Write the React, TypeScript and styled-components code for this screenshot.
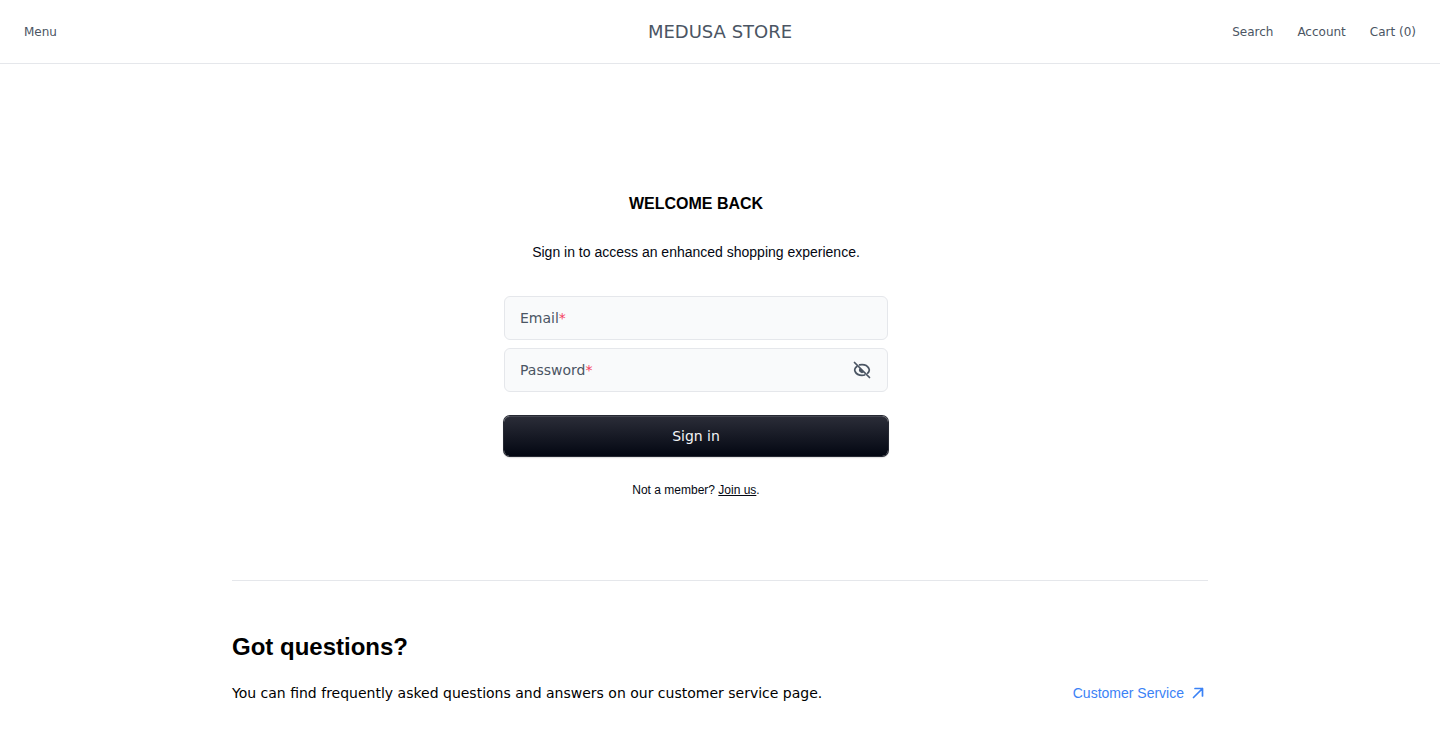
import React, { useState } from "react";
import styled, { createGlobalStyle } from "styled-components";

const sans = `"Liberation Sans", Arial, sans-serif`;
const ui = `"DejaVu Sans", Verdana, sans-serif`;

const GlobalStyle = createGlobalStyle`
  *, *::before, *::after { box-sizing: border-box; }
  body { margin: 0; background: #fff; color: #000; font-family: ${ui}; font-size: 14px; line-height: 24px; }
  h1, h2, p { margin: 0; }
  a { color: inherit; text-decoration: none; }
  button, input { font: inherit; color: inherit; }
`;

const Header = styled.header`
  display: flex;
  align-items: center;
  justify-content: space-between;
  height: 64px;
  padding: 0 24px;
  border-bottom: 1px solid #e5e7eb;
  color: #4b5563;
  font-size: 12px;
  line-height: 20px;
`;

const NavSide = styled.nav<{ $end?: boolean }>`
  display: flex;
  flex: 1 0 0;
  gap: 24px;
  justify-content: ${(p) => (p.$end ? "flex-end" : "flex-start")};
`;

const MenuButton = styled.button`
  padding: 0;
  border: 0;
  background: none;
  cursor: pointer;
`;

const Brand = styled.a`
  font-size: 18px;
  line-height: 28px;
  text-transform: uppercase;
`;

const Container = styled.main`
  max-width: 1024px;
  margin: 0 auto;
  padding: 48px 24px;
`;

const AccountGrid = styled.section`
  display: grid;
  grid-template-columns: 240px 1fr;
  padding: 48px 0;
  border-bottom: 1px solid #e5e7eb;
`;

const FormColumn = styled.div`
  grid-column: 2;
  padding: 32px;
`;

const SignInPanel = styled.div`
  display: flex;
  flex-direction: column;
  align-items: center;
  max-width: 384px;
  font-family: ${sans};
`;

const Title = styled.h1`
  margin-bottom: 24px;
  font-size: 16px;
  line-height: 24px;
  text-transform: uppercase;
`;

const Lead = styled.p`
  margin-bottom: 32px;
  color: #030712;
  text-align: center;
`;

const Form = styled.form`
  display: flex;
  flex-direction: column;
  gap: 8px;
  width: 100%;
  font-family: ${ui};
`;

const Field = styled.div`
  position: relative;
  color: #4b5563;
`;

const Label = styled.label`
  position: absolute;
  top: 10px;
  left: 16px;
  pointer-events: none;
`;

const Required = styled.span`
  color: #f43f5e;
`;

const Input = styled.input`
  display: block;
  width: 100%;
  height: 44px;
  padding: 16px 16px 4px;
  border: 1px solid #e5e7eb;
  border-radius: 6px;
  background: #f9fafb;
  outline: none;

  &:focus { border-color: #3b82f6; }
  &:focus + ${Label}, &:not(:placeholder-shown) + ${Label} {
    top: 0;
    font-size: 10px;
  }
`;

const RevealButton = styled.button`
  position: absolute;
  top: 12px;
  right: 16px;
  display: flex;
  padding: 0;
  border: 0;
  background: none;
  cursor: pointer;
`;

const SubmitButton = styled.button`
  height: 40px;
  margin-top: 16px;
  border: 0;
  border-radius: 6px;
  background: linear-gradient(180deg, #2b2d38 0%, #030712 100%);
  box-shadow: 0 0 0 1px #262933, 0 1px 2px 0 rgba(0, 0, 0, 0.4),
    inset 0 1px 0 rgba(255, 255, 255, 0.12);
  color: #f3f4f6;
  cursor: pointer;
`;

const JoinText = styled.p`
  margin-top: 24px;
  color: #030712;
  font-size: 12px;
  line-height: 20px;
`;

const JoinLink = styled.a`
  text-decoration: underline;
`;

const Help = styled.section`
  padding-top: 48px;
`;

const HelpTitle = styled.h2`
  margin-bottom: 16px;
  font-family: ${sans};
  font-size: 24px;
  line-height: 36px;
`;

const HelpRow = styled.div`
  display: flex;
  align-items: center;
  justify-content: space-between;
  gap: 32px;
`;

const ServiceLink = styled.a`
  display: flex;
  align-items: center;
  gap: 4px;
  color: #3b82f6;
  font-family: ${sans};
`;

function EyeIcon({ off }: { off: boolean }) {
  return (
    <svg width="20" height="20" viewBox="0 0 20 20" fill="none" stroke="currentColor" strokeWidth="1.7" strokeLinecap="round" strokeLinejoin="round" aria-hidden="true">
      {off ? (
        <>
          <path d="M7.600 4.900C8.400 4.700 9.200 4.600 10 4.600c3.500 0 5.900 1.900 6.900 3.900.5.900.5 2.100 0 3-.3.600-.7 1.100-1.200 1.600" />
          <path d="M4.900 6.500C4.100 7.100 3.500 7.800 3.100 8.500c-.5.9-.5 2.100 0 3 1 2 3.400 3.900 6.900 3.900.9 0 1.800-.1 2.600-.4" />
          <path d="M7.900 7.900a2.900 2.900 0 0 0 4.200 4.200Z" fill="currentColor" stroke="none" />
          <path d="m2.500 2.500 15 15" />
        </>
      ) : (
        <>
          <ellipse cx="10" cy="10" rx="7.300" ry="5.500" />
          <circle cx="10" cy="10" r="2.900" fill="currentColor" stroke="none" />
        </>
      )}
    </svg>
  );
}

function ArrowIcon() {
  return (
    <svg width="20" height="20" viewBox="0 0 20 20" fill="none" stroke="currentColor" strokeWidth="1.700" strokeLinecap="round" strokeLinejoin="round" aria-hidden="true">
      <path d="M5.500 14.500 14.500 5.500M7 5.500h7.500V13" />
    </svg>
  );
}

export default function App() {
  const [visible, setVisible] = useState(false);

  return (
    <>
      <GlobalStyle />
      <Header>
        <NavSide>
          <MenuButton type="button">Menu</MenuButton>
        </NavSide>
        <Brand href="#home">Medusa Store</Brand>
        <NavSide $end>
          <a href="#search">Search</a>
          <a href="#account">Account</a>
          <a href="#cart">Cart (0)</a>
        </NavSide>
      </Header>
      <Container>
        <AccountGrid>
          <FormColumn>
            <SignInPanel>
              <Title>Welcome back</Title>
              <Lead>Sign in to access an enhanced shopping experience.</Lead>
              <Form onSubmit={(e) => e.preventDefault()}>
                <Field>
                  <Input id="email" name="email" type="email" placeholder=" " autoComplete="email" required />
                  <Label htmlFor="email">Email<Required>*</Required></Label>
                </Field>
                <Field>
                  <Input id="password" name="password" type={visible ? "text" : "password"} placeholder=" " autoComplete="current-password" required />
                  <Label htmlFor="password">Password<Required>*</Required></Label>
                  <RevealButton type="button" aria-label="Toggle password visibility" onClick={() => setVisible(!visible)}>
                    <EyeIcon off={!visible} />
                  </RevealButton>
                </Field>
                <SubmitButton type="submit">Sign in</SubmitButton>
              </Form>
              <JoinText>
                Not a member? <JoinLink href="#register">Join us</JoinLink>.
              </JoinText>
            </SignInPanel>
          </FormColumn>
        </AccountGrid>
        <Help>
          <HelpTitle>Got questions?</HelpTitle>
          <HelpRow>
            <p>You can find frequently asked questions and answers on our customer service page.</p>
            <ServiceLink href="#customer-service">
              Customer Service
              <ArrowIcon />
            </ServiceLink>
          </HelpRow>
        </Help>
      </Container>
    </>
  );
}
